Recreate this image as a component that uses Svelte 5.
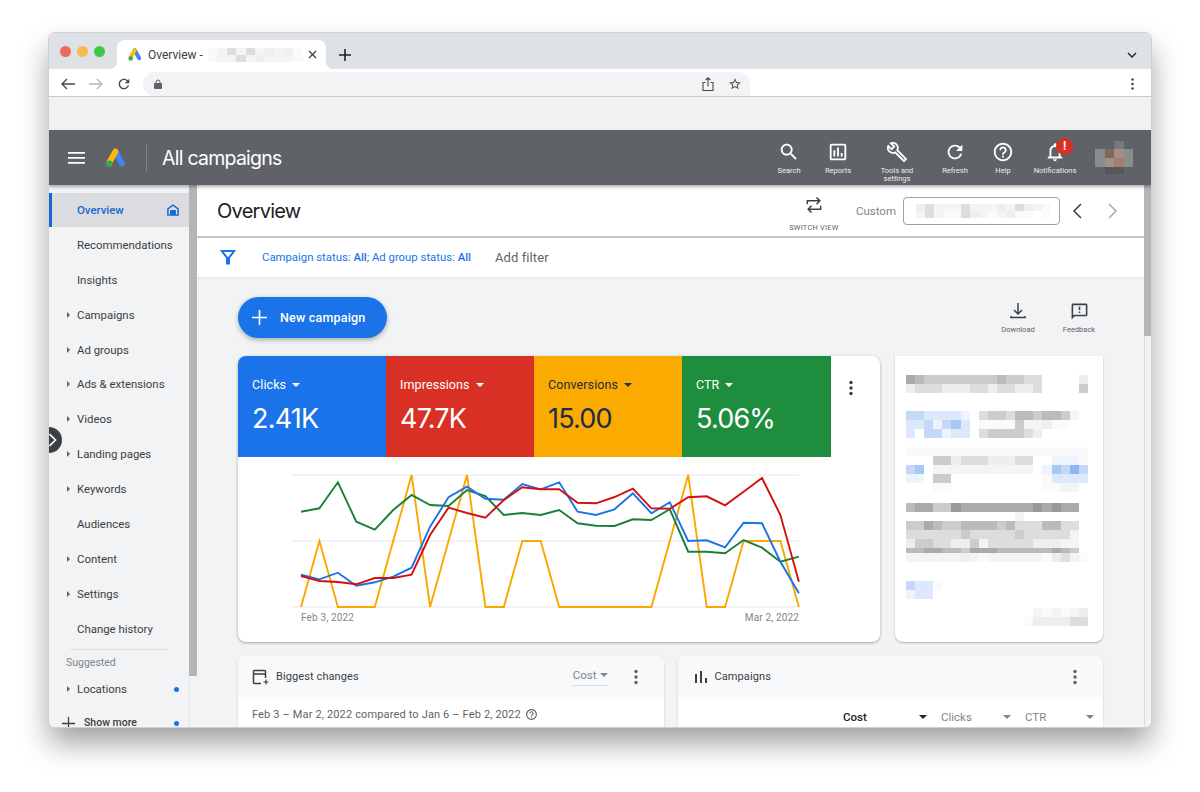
<script>
	const palette = {
		'.': 'transparent', g: '#f4f4f4', h: '#fafafa',
		u: '#dce8fb', v: '#c4d9f8', w: '#a6c8f5', x: '#eef4fd', y: '#8fb8f2',
		m: '#7d6a5e', n: '#a58e88', o: '#a07f70', p: '#8a8d90', q: '#76787c', r: '#55575a'
	};
	const tint = (ch) => palette[ch] ?? `#${ch}${ch}${ch}`;

	// blurred-out bits of the screenshot, [row height, one char per cell]
	const sideCard = [
		[9, 'abccccccccbccdd....e'],
		[9, 'edddeeeddeddeed....c'],
		[18, ''],
		[9, 'vvuuuux.dccdbbcbbcg.'],
		[9, 'uuvxvwu.hhhhcggehh..'],
		[9, 'u.vvxuu.dccccde.....'],
		[9, ''],
		[9, 'hhhhhhhhhhhhhhhhhhhh'],
		[9, '...ccedddeeedd..xxxh'],
		[9, 'vw.ggggggggggg.xwvyv'],
		[9, 'xx.cc..........huuuu'],
		[9, '...hh..........hhgg.'],
		[11, ''],
		[9, 'baacc9aaaaaaaa9a9aa.'],
		[9, '............g.......'],
		[9, 'ccabccbbbbcbdddbbdd.'],
		[9, 'ddddddcdddddcdddddg.'],
		[9, 'eccddeecgdddddeeegg.'],
		[5, 'bbaabbcaaabbbbbbabc.'],
		[9, 'ggggggeghgggggghedgh'],
		[19, ''],
		[9, 'vuuh'],
		[9, 'xuu.'],
		[9, ''],
		[9, '..............ghghge'],
		[9, '.............heeeedd']
	];
	const tabBlur = [
		[7, 'hgdgdgegeh'],
		[7, 'hggdgegggh']
	];
	const dateBlur = [
		[7, 'edgggdgggegdegh'],
		[7, 'gdghhdeghgehh.h']
	];
	const avatar = [
		[8, '..q.'],
		[9, 'pmnp'],
		[9, 'pnop'],
		[7, '.rr.']
	];

	const tools = [
		{ label: 'Search', width: 49, d: 'M15.5 14h-.79l-.28-.27C15.41 12.59 16 11.11 16 9.5 16 5.91 13.09 3 9.5 3S3 5.91 3 9.5 5.91 16 9.5 16c1.61 0 3.09-.59 4.23-1.57l.27.28v.79l5 4.99L20.49 19l-4.99-5zm-6 0C7.01 14 5 11.99 5 9.5S7.01 5 9.5 5 14 7.01 14 9.5 11.99 14 9.5 14z' },
		{ label: 'Reports', width: 49, d: 'M19 3H5c-1.1 0-2 .9-2 2v14c0 1.1.9 2 2 2h14c1.1 0 2-.9 2-2V5c0-1.1-.9-2-2-2zm0 16H5V5h14v14zM7 10h2v7H7zm4-3h2v10h-2zm4 6h2v4h-2z' },
		{ label: 'Tools and settings', width: 69, d: 'M22.61 18.99l-9.08-9.08c.93-2.34.45-5.1-1.44-7C9.79.61 6.21.4 3.66 2.26L7.5 6.11 6.08 7.52 2.25 3.69C.39 6.23.6 9.82 2.9 12.11c1.86 1.86 4.57 2.35 6.89 1.48l9.11 9.11c.39.39 1.02.39 1.41 0l2.3-2.3c.4-.38.4-1.01 0-1.41zm-3 1.6l-9.46-9.46c-.61.45-1.29.72-2 .82-1.36.2-2.79-.21-3.83-1.25C3.37 9.76 2.93 8.5 3 7.26l3.09 3.09 4.24-4.24-3.09-3.09c1.24-.07 2.49.37 3.44 1.31 1.08 1.08 1.49 2.57 1.24 3.96-.12.71-.42 1.37-.88 1.96l9.45 9.45-.88.88z' },
		{ label: 'Refresh', width: 47, d: 'M17.65 6.35C16.2 4.9 14.21 4 12 4c-4.42 0-7.99 3.58-7.99 8s3.57 8 7.99 8c3.73 0 6.84-2.55 7.73-6h-2.08c-.82 2.33-3.04 4-5.65 4-3.31 0-6-2.69-6-6s2.69-6 6-6c1.66 0 3.14.69 4.22 1.78L13 11h7V4l-2.35 2.35z' },
		{ label: 'Help', width: 49, d: 'M11 18h2v-2h-2v2zm1-16C6.48 2 2 6.48 2 12s4.48 10 10 10 10-4.48 10-10S17.52 2 12 2zm0 18c-4.41 0-8-3.59-8-8s3.59-8 8-8 8 3.59 8 8-3.59 8-8 8zm0-14c-2.21 0-4 1.79-4 4h2c0-1.1.9-2 2-2s2 .9 2 2c0 2-3 1.75-3 5h2c0-2.25 3-2.5 3-5 0-2.21-1.79-4-4-4z' },
		{ label: 'Notifications', width: 55, badge: true, d: 'M12 22c1.1 0 2-.9 2-2h-4c0 1.1.9 2 2 2zm6-6v-5c0-3.07-1.63-5.64-4.5-6.32V4c0-.83-.67-1.5-1.5-1.5s-1.5.67-1.5 1.5v.68C7.64 5.36 6 7.92 6 11v5l-2 2v1h16v-1l-2-2zm-2 1H8v-6c0-2.48 1.51-4.5 4-4.5s4 2.02 4 4.5v6z' }
	];

	const nav = [
		{ label: 'Overview', active: true },
		{ label: 'Recommendations' },
		{ label: 'Insights' },
		{ label: 'Campaigns', more: true },
		{ label: 'Ad groups', more: true },
		{ label: 'Ads & extensions', more: true },
		{ label: 'Videos', more: true },
		{ label: 'Landing pages', more: true },
		{ label: 'Keywords', more: true },
		{ label: 'Audiences' },
		{ label: 'Content', more: true },
		{ label: 'Settings', more: true },
		{ label: 'Change history' }
	];

	const metrics = [
		{ label: 'Clicks', value: '2.41K', tone: 'blue' },
		{ label: 'Impressions', value: '47.7K', tone: 'red' },
		{ label: 'Conversions', value: '15.00', tone: 'amber' },
		{ label: 'CTR', value: '5.06%', tone: 'green' }
	];

	// one value per day, Feb 3 to Mar 2
	const series = [
		{ color: '#fba700', data: [426, 228, 426, 426, 426, 228, 30, 426, 228, 30, 426, 426, 228, 228, 426, 426, 426, 426, 426, 426, 228, 30, 426, 426, 228, 228, 228, 426] },
		{ color: '#188038', data: [140, 130, 52, 170, 194, 135, 90, 120, 123, 75, 93, 150, 144, 150, 135, 175, 182, 183, 163, 165, 133, 260, 260, 265, 225, 248, 290, 275] },
		{ color: '#1a73e8', data: [329, 343, 323, 362, 352, 335, 308, 185, 97, 65, 101, 104, 57, 73, 52, 140, 150, 133, 85, 145, 112, 228, 226, 247, 173, 175, 290, 385] },
		{ color: '#d50f0f', data: [333, 348, 351, 358, 339, 339, 329, 210, 128, 144, 158, 105, 67, 73, 73, 113, 115, 96, 71, 130, 131, 97, 94, 121, 80, 39, 150, 350] }
	];
	const points = (data) =>
		data.map((v, i) => `${(63 + i * 18.44).toFixed(1)},${(v / 3 + 8).toFixed(1)}`).join(' ');
</script>

{#snippet blur(rows, cell)}
	<div class="blur">
		{#each rows as [h, cells]}
			<div class="blur-row" style="height:{h}px">
				{#each cells as ch}
					<i style="width:{cell}px;background:{tint(ch)}"></i>
				{/each}
			</div>
		{/each}
	</div>
{/snippet}

{#snippet adsLogo(size)}
	<svg width={size} height={size} viewBox="0 0 24 24">
		<path d="M12.5 5 19.5 18" stroke="#4285f4" stroke-width="6.4" stroke-linecap="round" />
		<path d="M12.5 5 6 16.5" stroke="#fbbc04" stroke-width="6.4" stroke-linecap="round" />
		<circle cx="5.8" cy="18.4" r="3.6" fill="#34a853" />
	</svg>
{/snippet}

{#snippet dots(color = '#5f6368')}
	<svg class="dots" width="4" height="16" viewBox="0 0 4 16" fill={color}>
		<circle cx="2" cy="2.5" r="1.7" /><circle cx="2" cy="8" r="1.7" /><circle cx="2" cy="13.5" r="1.7" />
	</svg>
{/snippet}

<div class="page">
<div class="window">
	<div class="tabstrip">
		<div class="lights"><i class="l1"></i><i class="l2"></i><i class="l3"></i></div>
		<div class="tab">
			{@render adsLogo(15)}
			<span class="tab-title">Overview -</span>
			{@render blur(tabBlur, 9.5)}
			<svg class="tab-close" width="9" height="9" viewBox="0 0 9 9" stroke="#3c4043" stroke-width="1.3"><path d="M1 1l7 7M8 1 1 8" /></svg>
		</div>
		<svg class="newtab" width="12" height="12" viewBox="0 0 12 12" stroke="#202124" stroke-width="1.6"><path d="M6 0v12M0 6h12" /></svg>
		<svg class="tabmenu" width="10" height="6" viewBox="0 0 10 6" fill="none" stroke="#202124" stroke-width="1.4"><path d="M1 1l4 4 4-4" /></svg>
	</div>

	<div class="toolbar">
		<svg width="14" height="12" viewBox="0 0 14 12" fill="none" stroke="#45494d" stroke-width="1.4"><path d="M14 6H1M6 1 1 6l5 5" /></svg>
		<svg width="14" height="12" viewBox="0 0 14 12" fill="none" stroke="#b4b7ba" stroke-width="1.4"><path d="M0 6h13M8 1l5 5-5 5" /></svg>
		<svg class="reload" width="16" height="16" viewBox="0 0 24 24" fill="#45494d"><path d="M17.65 6.35C16.2 4.9 14.21 4 12 4c-4.42 0-7.99 3.58-7.99 8s3.57 8 7.99 8c3.73 0 6.84-2.55 7.73-6h-2.08c-.82 2.33-3.04 4-5.65 4-3.31 0-6-2.69-6-6s2.69-6 6-6c1.66 0 3.14.69 4.22 1.78L13 11h7V4l-2.35 2.35z" /></svg>
		<div class="omnibox">
			<svg width="8" height="10" viewBox="0 0 8 10" fill="#5f6368"><path d="M1 4h6a1 1 0 0 1 1 1v4a1 1 0 0 1-1 1H1a1 1 0 0 1-1-1V5a1 1 0 0 1 1-1z" /><path d="M2 4.5V3a2 2 0 0 1 4 0v1.5" fill="none" stroke="#5f6368" stroke-width="1" /></svg>
			<span class="omni-space"></span>
			<svg width="12" height="14" viewBox="0 0 12 14" fill="none" stroke="#45494d" stroke-width="1.1"><path d="M3.5 5.5H1v8h10v-8H8.5M6 9.5V.8M3.6 3 6 .8 8.4 3" /></svg>
			<svg width="14" height="14" viewBox="0 0 24 24" fill="#45494d"><path d="M22 9.24l-7.19-.62L12 2 9.19 8.63 2 9.24l5.46 4.73L5.82 21 12 17.27 18.18 21l-1.63-7.03L22 9.24zM12 15.4l-3.76 2.27 1-4.28-3.32-2.88 4.38-.38L12 6.1l1.71 4.04 4.38.38-3.32 2.88 1 4.28L12 15.4z" /></svg>
		</div>
		<svg class="toolbar-dots" width="3" height="12" viewBox="0 0 3 12" fill="#45494d"><circle cx="1.5" cy="1.5" r="1.3" /><circle cx="1.5" cy="6" r="1.3" /><circle cx="1.5" cy="10.5" r="1.3" /></svg>
	</div>

	<div class="bookmarks"></div>

	<header class="topbar">
		<svg class="burger" width="17" height="12" viewBox="0 0 17 12" fill="#fff"><path d="M0 0h17v1.7H0zM0 5h17v1.7H0zM0 10h17v1.7H0z" /></svg>
		<span class="logo">{@render adsLogo(22)}</span>
		<span class="topbar-rule"></span>
		<span class="topbar-title">All campaigns</span>
		<div class="tools">
			{#each tools as t}
				<div class="tool" style="width:{t.width}px">
					<span class="tool-icon">
						<svg width="22" height="22" viewBox="0 0 24 24" fill="#fff"><path d={t.d} /></svg>
						{#if t.badge}<b class="badge">!</b>{/if}
					</span>
					<span class="tool-label">{t.label}</span>
				</div>
			{/each}
		</div>
		<div class="avatar">{@render blur(avatar, 9.5)}</div>
	</header>

	<div class="body">
		<aside class="sidebar">
			<div class="side-scroll"><nav class="nav">
				{#each nav as item}
					<div class="nav-item" class:active={item.active}>
						{#if item.more}<i class="caret"></i>{/if}
						<span>{item.label}</span>
						{#if item.active}
							<svg class="home" width="14" height="14" viewBox="0 0 24 24" fill="#1967d2"><path d="M12 2 2 9.5V22h20V9.5L12 2zm7.5 17.500H17V12H7v7.500H4.500v-8.700L12 5.200l7.500 5.600v8.700z" /><path d="M9 14h6v6H9z" /></svg>
						{/if}
					</div>
				{/each}
				<div class="nav-rule"></div>
				<div class="suggested">Suggested</div>
				<div class="nav-item locations"><i class="caret"></i><span>Locations</span><i class="dot"></i></div>
				<div class="nav-item showmore">
					<svg width="13" height="13" viewBox="0 0 13 13" stroke="#3c4043" stroke-width="1.3"><path d="M6.5 0v13M0 6.5h13" /></svg>
					<span>Show more</span><i class="dot"></i>
				</div>
			</nav></div>
			<div class="side-bar"><div class="side-thumb"></div></div>
		</aside>

		<div class="collapse">
			<svg width="9" height="14" viewBox="0 0 9 14" fill="none" stroke="#fff" stroke-width="1.7"><path d="M1.5 1l6 6-6 6" /></svg>
		</div>

		<main class="main">
			<div class="main-inner">
				<div class="page-head">
					<h1>Overview</h1>
					<div class="switch">
						<svg width="20" height="20" viewBox="0 0 24 24" fill="none" stroke="#3c4043" stroke-width="1.8"><path d="M4 11V7h15M15 3l4 4-4 4M20 13v4H5M9 13l-4 4 4 4" /></svg>
						<span>SWITCH VIEW</span>
					</div>
					<span class="custom">Custom</span>
					<div class="datebox">{@render blur(dateBlur, 9)}</div>
					<svg class="pager" width="10" height="16" viewBox="0 0 10 16" fill="none" stroke="#3c4043" stroke-width="1.5"><path d="M9 1 2 8l7 7" /></svg>
					<svg class="pager pager-next" width="10" height="16" viewBox="0 0 10 16" fill="none" stroke="#a8abaf" stroke-width="1.5"><path d="m1 1 7 7-7 7" /></svg>
				</div>

				<div class="filter-row">
					<svg width="16" height="16" viewBox="0 0 16 16" fill="none" stroke="#1a73e8" stroke-width="2"><path d="M1.8 2h12.400L9 8.700V14.500H7V8.700z" /></svg>
					<span class="filter-text">Campaign status: <b>All</b>; Ad group status: <b>All</b></span>
					<span class="add-filter">Add filter</span>
				</div>

				<div class="content">
					<div class="actions">
						<button class="new-campaign">
							<svg width="15" height="15" viewBox="0 0 15 15" stroke="#fff" stroke-width="1.6"><path d="M7.5 0v15M0 7.5h15" /></svg>
							New campaign
						</button>
						<div class="action">
							<svg width="18" height="18" viewBox="0 0 18 18" fill="none" stroke="#3c4043" stroke-width="1.5"><path d="M9 1v10.500M5 8l4 4 4-4M2 14v1.500h14V14" /></svg>
							<span>Download</span>
						</div>
						<div class="action feedback">
							<svg width="19" height="19" viewBox="0 0 24 24" fill="#3c4043"><path d="M20 2H4c-1.100 0-2 .9-2 2v18l4-4h14c1.100 0 2-.9 2-2V4c0-1.100-.9-2-2-2zm0 14H5.170L4 17.170V4h16v12zM11 12h2v2h-2zm0-6h2v4h-2z" /></svg>
							<span>Feedback</span>
						</div>
					</div>

					<div class="cards-top">
						<section class="chart-card">
							<div class="metrics">
								{#each metrics as m}
									<div class="metric {m.tone}">
										<div class="metric-label">{m.label}<i class="arrow"></i></div>
										<div class="metric-value">{m.value}</div>
									</div>
								{/each}
								<div class="metric-menu">{@render dots('#3c4043')}</div>
							</div>
							<svg class="plot" width="642" height="155" viewBox="0 0 642 155">
								{#each [18, 84, 150] as y}
									<line x1="53" x2="561" y1={y} y2={y} stroke="#e6e7e9" stroke-width="1.2" />
								{/each}
								{#each series as s}
									<polyline points={points(s.data)} fill="none" stroke={s.color} stroke-width="1.9" />
								{/each}
							</svg>
							<div class="dates"><span>Feb 3, 2022</span><span>Mar 2, 2022</span></div>
						</section>
						<section class="side-card">{@render blur(sideCard, 9.1)}</section>
					</div>

					<div class="cards-bottom">
						<section class="panel">
							<div class="panel-head">
								<svg width="18" height="18" viewBox="0 0 18 18" fill="none" stroke="#3c4043" stroke-width="1.5"><path d="M9 15.500H2.500a1 1 0 0 1-1-1v-11a1 1 0 0 1 1-1h10a1 1 0 0 1 1 1V10M1.500 6h12" /><path d="M14 11.500v5M11.500 14h5" stroke-width="1.2" /></svg>
								<span class="panel-title">Biggest changes</span>
								<span class="panel-select">Cost<i class="arrow"></i></span>
								{@render dots()}
							</div>
							<div class="range">Feb 3 – Mar 2, 2022 compared to Jan 6 – Feb 2, 2022
								<svg width="13" height="13" viewBox="0 0 24 24" fill="#5f6368"><path d="M11 18h2v-2h-2v2zm1-16C6.480 2 2 6.480 2 12s4.480 10 10 10 10-4.480 10-10S17.520 2 12 2zm0 18c-4.410 0-8-3.590-8-8s3.590-8 8-8 8 3.590 8 8-3.590 8-8 8zm0-14c-2.210 0-4 1.790-4 4h2c0-1.100.9-2 2-2s2 .9 2 2c0 2-3 1.750-3 5h2c0-2.250 3-2.500 3-5 0-2.210-1.790-4-4-4z" /></svg>
							</div>
						</section>
						<section class="panel">
							<div class="panel-head">
								<svg class="bars" width="14" height="14" viewBox="0 0 14 14" fill="#3c4043"><path d="M1 4h2v9H1zM6 1h2v12H6zM11 8h2v5h-2z" /></svg>
								<span class="panel-title campaigns">Campaigns</span>
								{@render dots()}
							</div>
							<div class="columns">
								<span class="col col-cost">Cost<i class="arrow"></i></span>
								<span class="col col-clicks">Clicks<i class="arrow"></i></span>
								<span class="col col-ctr">CTR<i class="arrow"></i></span>
							</div>
						</section>
					</div>
				</div>
			</div>
			<div class="main-bar"><div class="main-thumb"></div></div>
		</main>
	</div>
</div>
</div>

<style>
	:global(body) {
		margin: 0;
		background: #fff;
	}

	.page {
		height: 792px;
		padding: 33px 0 0 49px;
		box-sizing: border-box;
		overflow: hidden;
	}

	.window {
		position: relative;
		display: flex;
		flex-direction: column;
		width: 1102px;
		height: 694px;
		border-radius: 6px;
		overflow: hidden;
		background: #fff;
		font-family: Roboto, 'Liberation Sans', sans-serif;
		color: #3c4043;
		box-shadow: 0 0 0 1px #cfd0d2, 0 16px 30px rgba(0, 0, 0, 0.38);
	}

	i {
		display: block;
		flex: none;
	}

	.blur-row {
		display: flex;
	}

	.tabstrip {
		display: flex;
		align-items: flex-end;
		flex: none;
		height: 36px;
		background: #dee1e6;
	}

	.lights {
		display: flex;
		gap: 6px;
		align-self: flex-start;
		width: 68px;
		padding: 13px 0 0 11px;
		box-sizing: border-box;
	}

	.lights i {
		width: 11px;
		height: 11px;
		border-radius: 50%;
	}

	.l1 { background: #ec6a5e; }
	.l2 { background: #f5bd4f; }
	.l3 { background: #3cc84a; }

	.tab {
		position: relative;
		display: flex;
		align-items: center;
		width: 209px;
		height: 29px;
		box-sizing: border-box;
		padding: 0 9px 0 10px;
		background: #fff;
		border-radius: 8px 8px 0 0;
	}

	.tab::before,
	.tab::after {
		content: '';
		position: absolute;
		bottom: 0;
		width: 8px;
		height: 8px;
	}

	.tab::before {
		left: -8px;
		background: radial-gradient(circle at 0 0, transparent 8px, #fff 8.5px);
	}

	.tab::after {
		right: -8px;
		background: radial-gradient(circle at 100% 0, transparent 8px, #fff 8.5px);
	}

	.tab-title {
		margin-left: 6px;
		font-size: 12px;
		color: #3c4043;
	}

	.tab .blur {
		margin-left: 5px;
	}

	.tab-close {
		margin-left: auto;
	}

	.newtab {
		margin: 0 0 8px 13px;
	}

	.tabmenu {
		margin: 0 14px 11px auto;
	}

	.toolbar {
		display: flex;
		align-items: center;
		flex: none;
		height: 28px;
		padding: 3px 17px 0 12px;
		box-sizing: border-box;
		background: #fff;
		border-bottom: 1px solid #c8c9cb;
		gap: 14px;
	}

	.reload {
		margin-left: -1px;
	}

	.omnibox {
		display: flex;
		align-items: center;
		width: 607px;
		height: 24px;
		margin-left: -3px;
		padding: 0 8px 0 11px;
		box-sizing: border-box;
		background: #f1f3f4;
		border-radius: 12px 12px 0 12px;
		gap: 14px;
	}

	.omni-space {
		flex: 1;
	}

	.toolbar-dots {
		margin-left: auto;
	}

	.bookmarks {
		flex: none;
		height: 33px;
		background: #f1f1f1;
	}

	.topbar {
		position: relative;
		z-index: 2;
		display: flex;
		align-items: center;
		flex: none;
		height: 55px;
		padding-left: 19px;
		background: #5f6368;
		color: #fff;
		box-shadow: 0 2px 3px rgba(0, 0, 0, 0.3);
	}

	.logo {
		display: flex;
		margin-left: 19px;
	}

	.topbar-rule {
		width: 1px;
		height: 28px;
		margin-left: 20px;
		background: #80858a;
	}

	.topbar-title {
		margin-left: 15px;
		font-size: 19.5px;
		font-family: Inter, Roboto, sans-serif;
		letter-spacing: -0.75px;
	}

	.tools {
		display: flex;
		margin-left: auto;
		align-self: flex-start;
		padding-top: 11px;
		transform: translateX(-1px);
	}

	.tool {
		display: flex;
		flex-direction: column;
		align-items: center;
		text-align: center;
	}

	.tool-icon {
		position: relative;
		display: flex;
		height: 24px;
	}

	.tool-label {
		margin-top: 1.5px;
		width: 44px;
		font-size: 7.5px;
		line-height: 8.5px;
		color: #eceded;
	}

	.tool:last-child .tool-label {
		width: auto;
	}

	.badge {
		position: absolute;
		top: -3px;
		left: 12px;
		width: 17px;
		height: 17px;
		border-radius: 50%;
		background: #d93025;
		color: #fff;
		font-size: 12px;
		line-height: 17px;
		text-align: center;
	}

	.avatar {
		margin: 0 18px 0 11.5px;
	}

	.body {
		position: relative;
		display: flex;
		flex: 1;
		min-height: 0;
	}

	.sidebar {
		display: flex;
		flex: none;
		width: 148px;
		background: #f1f3f4;
	}

	.side-scroll {
		width: 140px;
		overflow: hidden;
	}

	.nav {
		padding-top: 7.5px;
	}

	.nav-item {
		position: relative;
		display: flex;
		align-items: center;
		height: 34.9px;
		padding-left: 28px;
		box-sizing: border-box;
		font-size: 11.4px;
		white-space: nowrap;
	}

	.nav-item.active {
		padding-left: 25px;
		background: #dadce0;
		border-left: 3px solid #1967d2;
		color: #1967d2;
		font-weight: 500;
	}

	.home {
		position: absolute;
		right: 9px;
	}

	.caret {
		position: absolute;
		left: 18px;
		top: 50%;
		margin-top: -3px;
		border-left: 3.5px solid #5f6368;
		border-top: 3px solid transparent;
		border-bottom: 3px solid transparent;
	}

	.nav-rule {
		height: 1px;
		margin: 3px 21px 0;
		background: #dde0e3;
	}

	.suggested {
		margin: 6px 0 0 17px;
		font-size: 10.5px;
		line-height: 13px;
		color: #80868b;
	}

	.nav-item.locations {
		height: 28px;
		margin-top: 6px;
	}

	.dot {
		position: absolute;
		right: 10px;
		width: 5px;
		height: 5px;
		border-radius: 50%;
		background: #1a73e8;
	}

	.nav-item.showmore {
		height: 10px;
		margin-top: 15px;
		padding-left: 13px;
		gap: 9px;
		font-size: 10.5px;
		line-height: 10px;
		font-weight: 500;
	}

	.side-bar {
		width: 8px;
		height: 100%;
		border-left: 1px solid #e4e6e8;
		box-sizing: border-box;
	}

	.side-thumb {
		width: 8px;
		height: 491px;
		margin-left: -1px;
		background: #b5b5b5;
	}

	.collapse {
		position: absolute;
		z-index: 3;
		left: -13px;
		top: 242px;
		display: flex;
		align-items: center;
		justify-content: flex-end;
		width: 26px;
		height: 26px;
		padding-right: 5px;
		box-sizing: border-box;
		border-radius: 50%;
		background: #3c4043;
	}

	.main {
		display: flex;
		flex: 1;
		min-width: 0;
		background: #f1f3f4;
	}

	.main-inner {
		flex: 1;
		min-width: 0;
		overflow: hidden;
	}

	.main-bar {
		flex: none;
		width: 7px;
		border-left: 1px solid #dadce0;
		box-sizing: border-box;
	}

	.main-thumb {
		width: 7px;
		height: 151px;
		margin-left: -1px;
		background: #b5b5b5;
	}

	.page-head {
		display: flex;
		align-items: center;
		height: 53px;
		padding-left: 20px;
		box-sizing: border-box;
		background: #fff;
		border-bottom: 2px solid #c4c6c8;
	}

	.page-head h1 {
		margin: 0;
		font-family: Inter, Roboto, sans-serif;
		font-size: 20px;
		font-weight: 400;
		color: #202124;
		letter-spacing: -0.75px;
	}

	.switch {
		display: flex;
		flex-direction: column;
		align-items: center;
		width: 60px;
		margin-left: auto;
		gap: 8px;
		padding-top: 6px;
		transform: translateX(1px);
	}

	.switch span {
		font-size: 7.5px;
		color: #5f6368;
		letter-spacing: 0.2px;
		white-space: nowrap;
	}

	.custom {
		margin-left: 13px;
		font-size: 11.5px;
		color: #80868b;
	}

	.datebox {
		display: flex;
		align-items: center;
		width: 157px;
		height: 28px;
		margin-left: 7px;
		padding-left: 12px;
		box-sizing: border-box;
		border: 1px solid #9aa0a6;
		border-radius: 4px;
	}

	.pager {
		margin-left: 12px;
	}

	.pager-next {
		margin: 0 26px 0 26px;
	}

	.filter-row {
		display: flex;
		align-items: center;
		height: 41px;
		padding: 0 0 1px 23px;
		box-sizing: border-box;
		background: #fff;
		border-bottom: 2px solid #e8eaed;
	}

	.filter-text {
		margin-left: 26px;
		font-size: 11.35px;
		color: #1a73e8;
	}

	.filter-text b {
		font-weight: 500;
	}

	.add-filter {
		margin-left: 24px;
		font-size: 13px;
		color: #5f6368;
		letter-spacing: 0.1px;
	}

	.content {
		padding: 18px 41px 0;
	}

	.actions {
		display: flex;
		align-items: flex-start;
		height: 59px;
	}

	.new-campaign {
		display: flex;
		align-items: center;
		gap: 13px;
		width: 149px;
		height: 41px;
		padding: 0 0 0 14px;
		border: 0;
		border-radius: 21px;
		background: #1a73e8;
		color: #fff;
		font: 500 12.5px Roboto, sans-serif;
		letter-spacing: 0.2px;
		box-shadow: 0 2px 5px rgba(60, 64, 67, 0.4);
	}

	.action {
		display: flex;
		flex-direction: column;
		align-items: center;
		gap: 5px;
		width: 50px;
		margin: 0 11px 0 auto;
		padding-top: 5px;
		font-size: 7.5px;
		color: #5f6368;
	}

	.action.feedback {
		margin: 0 -1px 0 0;
		gap: 4px;
	}

	.cards-top {
		display: flex;
		gap: 15px;
	}

	.chart-card {
		width: 642px;
		height: 286px;
		flex: none;
		background: #fff;
		border-radius: 8px;
		overflow: hidden;
		box-shadow: 0 1px 3px rgba(60, 64, 67, 0.45);
	}

	.metrics {
		display: flex;
		height: 101px;
	}

	.metric {
		width: 148px;
		padding: 21px 0 0 14px;
		box-sizing: border-box;
		color: #fff;
	}

	.blue { background: #1a73e8; }
	.red { background: #d93025; }
	.amber { background: #fbab00; color: #202b45; }
	.metric.green { width: 149px; background: #1e8e3e; }

	.metric-label {
		display: flex;
		align-items: center;
		gap: 6px;
		font-size: 12.5px;
		line-height: 15px;
		letter-spacing: 0.1px;
	}

	.arrow {
		border-left: 4.5px solid transparent;
		border-right: 4.5px solid transparent;
		border-top: 4.5px solid currentColor;
	}

	.metric-value {
		margin-top: 11px;
		font-family: Inter, Roboto, sans-serif;
		font-size: 27px;
		line-height: 32px;
		letter-spacing: -0.8px;
	}

	.metric-menu {
		padding: 24px 0 0 18px;
	}

	.plot {
		display: block;
	}

	.dates {
		display: flex;
		justify-content: space-between;
		padding: 0 81px 0 63px;
		font-size: 10px;
		color: #80868b;
		letter-spacing: 0.15px;
	}

	.side-card {
		flex: 1;
		height: 286px;
		padding: 19px 0 0 11px;
		box-sizing: border-box;
		background: #fff;
		border-radius: 0 0 8px 8px;
		box-shadow: 0 1px 2px rgba(60, 64, 67, 0.4);
	}

	.cards-bottom {
		display: flex;
		gap: 14px;
		margin-top: 14px;
	}

	.panel {
		flex: 1;
		height: 160px;
		background: #fff;
		border-radius: 8px;
		box-shadow: 0 1px 2px rgba(60, 64, 67, 0.25);
	}

	.panel-head {
		display: flex;
		align-items: center;
		height: 41px;
		padding: 0 26px 0 14px;
		background: #f8f9fa;
		border-radius: 8px 8px 0 0;
	}

	.panel-title {
		margin-left: 6px;
		font-size: 11px;
		letter-spacing: 0.1px;
	}

	.bars {
		margin-left: 2px;
	}

	.panel-title.campaigns {
		margin-left: 7px;
	}

	.panel-select {
		display: flex;
		align-items: center;
		gap: 3px;
		margin: 0 26px 0 auto;
		padding-bottom: 3px;
		border-bottom: 1px solid #dadce0;
		font-size: 11.5px;
		color: #80868b;
	}

	.panel-head .dots {
		margin-left: auto;
	}

	.panel-select + .dots {
		margin-left: 0;
	}

	.range {
		display: flex;
		align-items: center;
		gap: 4px;
		padding: 11px 0 0 14px;
		font-size: 11px;
		letter-spacing: 0.15px;
		color: #5f6368;
	}

	.columns {
		display: flex;
		justify-content: flex-end;
		gap: 10px;
		padding: 13px 5px 0 0;
		font-size: 11.5px;
		color: #80868b;
	}

	.col {
		display: flex;
		align-items: center;
		justify-content: space-between;
		padding: 0 4px 5px 0;
		box-sizing: border-box;
		border-bottom: 1px solid #dadce0;
	}

	.col-cost {
		width: 88px;
		color: #202124;
		font-weight: 500;
	}

	.col-clicks {
		width: 74px;
	}

	.col-ctr {
		width: 73px;
	}
</style>
